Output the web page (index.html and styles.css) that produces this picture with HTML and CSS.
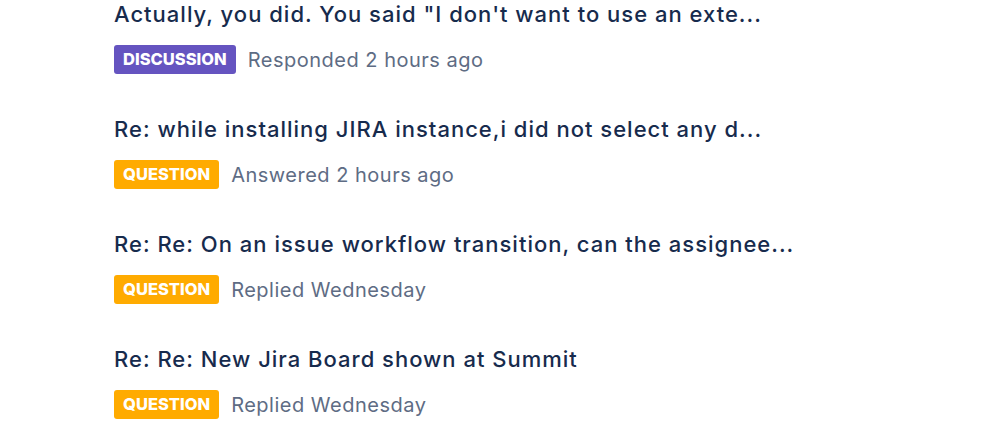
FILE: index.html
```html
<!DOCTYPE html>
<html lang="en">
<head>
    <meta charset="UTF-8">
    <title>Activity</title>
    <link rel="stylesheet" href="styles.css">
</head>
<body>

<div class="feed">
    <div class="item">
        <div class="title">Actually, you did. You said "I don't want to use an exte...</div>
        <div class="meta">
            <span class="badge discussion">Discussion</span>
            <span class="status">Responded 2 hours ago</span>
        </div>
    </div>

    <div class="item">
        <div class="title">Re: while installing JIRA instance,i did not select any d...</div>
        <div class="meta">
            <span class="badge question">Question</span>
            <span class="status">Answered 2 hours ago</span>
        </div>
    </div>

    <div class="item">
        <div class="title">Re: Re: On an issue workflow transition, can the assignee...</div>
        <div class="meta">
            <span class="badge question">Question</span>
            <span class="status">Replied Wednesday</span>
        </div>
    </div>

    <div class="item">
        <div class="title">Re: Re: New Jira Board shown at Summit</div>
        <div class="meta">
            <span class="badge question">Question</span>
            <span class="status">Replied Wednesday</span>
        </div>
    </div>
</div>

</body>
</html>
```

FILE: styles.css
```css
body { margin: 0; background: #fff; font-family: Inter, "Noto Sans", sans-serif; }
.feed { padding: 0 0 0 114px; }
.item { padding-bottom: 41px; }
.title { font-size: 22px; line-height: 28px; font-weight: 500; letter-spacing: 1px; color: #172B4D; white-space: nowrap; }
.meta { display: flex; align-items: center; gap: 12px; margin-top: 17px; height: 29px; }
.badge { display: inline-block; height: 29px; line-height: 29px; padding: 0 9px; border-radius: 3px; color: #fff; font-size: 16.5px; font-weight: 800; text-transform: uppercase; }
.discussion { background: #6554C0; }
.question { background: #FFAB00; }
.status { font-size: 20px; letter-spacing: 0.5px; color: #5E6C84; }
```
